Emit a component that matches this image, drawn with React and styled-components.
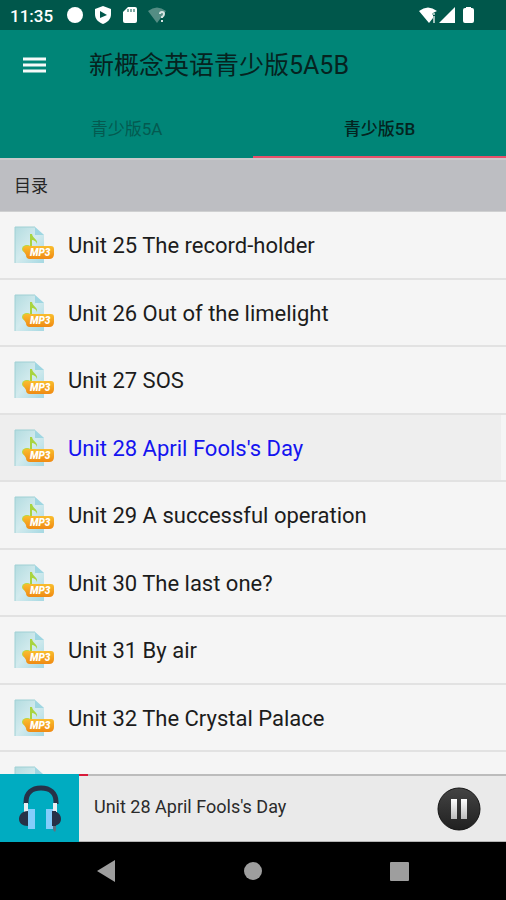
import React, { useState } from "react";
import styled, { createGlobalStyle } from "styled-components";

const GlobalStyle = createGlobalStyle`
  * { box-sizing: border-box; }
  body { margin: 0; background: #f5f5f5; }
  button { font: inherit; color: inherit; border: 0; padding: 0; background: none; cursor: pointer; }
  svg { display: block; flex: none; }
`;

const Screen = styled.div`
  display: flex;
  flex-direction: column;
  height: 100vh;
  overflow: hidden;
  background: #f5f5f5;
  color: #1c1c1c;
  font-family: Roboto, "Noto Sans CJK SC", sans-serif;
`;

const StatusBar = styled.div`
  display: flex;
  flex: none;
  align-items: center;
  justify-content: space-between;
  height: 30px;
  padding: 0 32px 0 10px;
  background: #00574b;
  color: #fff;
`;

const StatusGroup = styled.div`
  display: flex;
  align-items: center;
  gap: ${(p) => p.$gap}px;
`;

const Clock = styled.time`
  padding-top: 2px;
  font-size: 17px;
  font-weight: 500;
  line-height: 28px;
`;

const AppBar = styled.header`
  display: flex;
  flex: none;
  align-items: center;
  gap: 40px;
  height: 70px;
  padding-left: 21px;
  background: #008577;
`;

const MenuButton = styled.button`
  display: flex;
`;

const Title = styled.h1`
  margin: 0;
  padding-top: 2px;
  color: #06231f;
  font-size: 25px;
  font-weight: 400;
  line-height: 36px;
`;

const Tabs = styled.div`
  display: grid;
  flex: none;
  grid-template-columns: 1fr 1fr;
  height: 58px;
  background: #008577;
`;

const Tab = styled.button`
  padding-bottom: 2px;
  border-bottom: 2px solid ${(p) => (p["aria-selected"] ? "#e8506a" : "#008577")};
  color: ${(p) => (p["aria-selected"] ? "#042420" : "#045a50")};
  font-size: 17px;
  font-weight: ${(p) => (p["aria-selected"] ? 500 : 400)};
`;

const SectionTitle = styled.h2`
  flex: none;
  height: 54px;
  margin: 0;
  padding-left: 14px;
  border-top: 2px solid #c9cacb;
  border-bottom: 1px solid #cfd0d1;
  background: #bdbec2;
  color: #262626;
  font-size: 17px;
  font-weight: 400;
  line-height: 52px;
`;

const TrackList = styled.ul`
  flex: 1;
  min-height: 0;
  margin: 0;
  padding: 0;
  overflow-y: auto;
  scrollbar-width: none;
  list-style: none;
`;

const TrackItem = styled.li`
  height: 68px;
  border-bottom: 2px solid #e2e2e2;
  &:nth-child(even) { height: 67px; }
`;

const TrackButton = styled.button`
  display: flex;
  align-items: center;
  gap: 12px;
  width: ${(p) => (p.$active ? "calc(100% - 5px)" : "100%")};
  height: 100%;
  padding: 2px 0 0 14px;
  background: ${(p) => (p.$active ? "#eeeeee" : "transparent")};
  color: ${(p) => (p.$active ? "#1414f0" : "#1c1c1c")};
  font-size: 22px;
  line-height: 28px;
  text-align: left;
`;

const Player = styled.section`
  display: grid;
  flex: none;
  grid-template-columns: 79px 1fr;
  height: 68px;
  background: #eaeaea;
`;

const Cover = styled.div`
  display: flex;
  align-items: center;
  justify-content: center;
  background: #00acc1;
`;

const PlayerBody = styled.div`
  display: flex;
  flex-direction: column;
  border-bottom: 1px solid #b5b5b5;
`;

const Progress = styled.div`
  height: 2px;
  background: #bcbcbc;
`;

const ProgressFill = styled.div`
  height: 2px;
  background: #d81b3a;
`;

const PlayerRow = styled.div`
  display: flex;
  flex: 1;
  align-items: center;
  justify-content: space-between;
  padding: 0 25px 0 15px;
`;

const NowPlaying = styled.span`
  padding-bottom: 3px;
  color: #2b2b2b;
  font-size: 18px;
  line-height: 24px;
`;

const PauseButton = styled.button`
  display: flex;
  border-radius: 50%;
`;

const SystemNav = styled.nav`
  display: flex;
  flex: none;
  align-items: center;
  justify-content: center;
  gap: 126px;
  height: 58px;
  background: #000;
`;

const NavButton = styled.button`
  display: flex;
`;

const tracks = [
  "Unit 25 The record-holder",
  "Unit 26 Out of the limelight",
  "Unit 27 SOS",
  "Unit 28 April Fools's Day",
  "Unit 29 A successful operation",
  "Unit 30 The last one?",
  "Unit 31 By air",
  "Unit 32 The Crystal Palace",
  "Unit 33 Mercy mission",
];

function Mp3Icon() {
  return (
    <svg width="42" height="40" viewBox="0 0 42 40" aria-hidden="true">
      <defs>
        <linearGradient id="sheet" x1="0" y1="0" x2="1" y2="1">
          <stop offset="0" stopColor="#b3dce0" />
          <stop offset="0.5" stopColor="#d3ebee" />
          <stop offset="1" stopColor="#a5d8e2" />
        </linearGradient>
        <linearGradient id="tag" x1="0" y1="0" x2="0" y2="1">
          <stop offset="0" stopColor="#f9bd2e" />
          <stop offset="1" stopColor="#f08a12" />
        </linearGradient>
      </defs>
      <path d="M1 1h20l9 8v28H1z" fill="url(#sheet)" />
      <path d="M1 37V1h20" fill="none" stroke="#9fd0d4" />
      <path d="M21 1v8h9z" fill="#9fd6e2" />
      <path d="M16 22V8h2c1 5 6 5 5 10-1-3-3-4-5-4v8z" fill="#a9d43f" />
      <ellipse cx="13" cy="23" rx="5" ry="4" fill="#b9d83b" />
      <path d="M12 20h25q3 0 3 3v5q0 5-5 5H16q-4 0-4-4l-3-5q0-4 3-4z" fill="url(#tag)" />
      <text x="16" y="30" fill="#fff" fontFamily="Roboto, sans-serif" fontSize="10" fontWeight="900" fontStyle="italic">MP3</text>
    </svg>
  );
}

function HeadphonesIcon() {
  return (
    <svg width="44" height="48" viewBox="0 0 44 48" aria-hidden="true">
      <path d="M8 20v-2C8 9 14 4 23 4s15 5 15 14v2" fill="none" stroke="#263248" strokeWidth="5" />
      <path d="M6 19h4v9H6zM35 19h4v9h-4z" fill="#e8eef2" />
      <path d="M10 27v15C4 42 1 39 1 35s3-8 9-8zM34 27v15c6 0 9-3 9-7s-3-8-9-8z" fill="#263248" />
      <path d="M10 25h7v20h-7zM28 25h7v20h-7z" fill="#84cdfb" />
      <path d="M34 27v15h4V27z" fill="#263248" />
      <path d="M35 42h3v4l-1 2-2-2z" fill="#5c7382" />
    </svg>
  );
}

function PauseIcon() {
  return (
    <svg width="44" height="44" viewBox="0 0 44 44" aria-hidden="true">
      <defs>
        <linearGradient id="disc" x1="0" y1="0" x2="0" y2="1">
          <stop offset="0" stopColor="#444" />
          <stop offset="1" stopColor="#202020" />
        </linearGradient>
        <linearGradient id="bars" x1="0" y1="0" x2="0" y2="1">
          <stop offset="0" stopColor="#fff" />
          <stop offset="1" stopColor="#bbb" />
        </linearGradient>
      </defs>
      <circle cx="22" cy="22" r="21" fill="url(#disc)" stroke="#151515" />
      <path d="M14 12h6v20h-6zM24 12h6v20h-6z" fill="url(#bars)" />
    </svg>
  );
}

export default function App() {
  const [tab, setTab] = useState(1);
  const [active, setActive] = useState(3);
  return (
    <>
      <GlobalStyle />
      <Screen>
        <StatusBar>
          <StatusGroup $gap={13}>
            <Clock>11:35</Clock>
            <StatusGroup $gap={10}>
              <svg width="18" height="18" viewBox="0 0 18 18" aria-hidden="true">
                <circle cx="9" cy="9" r="8" fill="#fff" />
              </svg>
              <svg width="18" height="18" viewBox="0 0 18 18" aria-hidden="true">
                <path d="M9 0l8 3v5c0 5-3 8-8 10-5-2-8-5-8-10V3z" fill="#fff" />
                <path d="M6 5l7 4-7 3z" fill="#00574b" />
              </svg>
              <svg width="16" height="18" viewBox="0 0 16 18" aria-hidden="true">
                <path d="M6 1h7q2 0 2 2v12q0 2-2 2H3q-2 0-2-2V6z" fill="#fff" />
                <path d="M6 3v3M9 3v3M12 3v3" stroke="#00574b" />
              </svg>
              <svg width="18" height="18" viewBox="0 0 18 18" aria-hidden="true">
                <path d="M0 5Q9-2 18 5l-9 12z" fill="#548d84" />
                <path d="M12 8q0-2 2-2t2 2q0 2-2 3v1M14 14v2" fill="none" stroke="#d5e5e2" strokeWidth="2" />
              </svg>
            </StatusGroup>
          </StatusGroup>
          <StatusGroup $gap={2}>
            <svg width="18" height="18" viewBox="0 0 18 18" aria-hidden="true">
              <path d="M0 5Q9-2 18 5l-4 2v5l-4 5z" fill="#fff" />
              <path d="M13 8h3M15 10v7" stroke="#9dc0ba" strokeWidth="2" />
            </svg>
            <StatusGroup $gap={8}>
              <svg width="16" height="18" viewBox="0 0 16 18" aria-hidden="true">
                <path d="M16 1v16H0z" fill="#fff" />
              </svg>
              <svg width="11" height="18" viewBox="0 0 11 18" aria-hidden="true">
                <path d="M3 1h5v1h1q2 0 2 2v11q0 2-2 2H2q-2 0-2-2V4q0-2 2-2h1z" fill="#fff" />
              </svg>
            </StatusGroup>
          </StatusGroup>
        </StatusBar>
        <AppBar>
          <MenuButton type="button" aria-label="菜单">
            <svg width="28" height="18" viewBox="0 0 28 18" aria-hidden="true">
              <path d="M2 3h23M2 9h23M2 15h23" stroke="#f5faf9" strokeWidth="3" />
            </svg>
          </MenuButton>
          <Title>新概念英语青少版5A5B</Title>
        </AppBar>
        <Tabs role="tablist">
          {["青少版5A", "青少版5B"].map((label, i) => (
            <Tab key={label} type="button" role="tab" aria-selected={tab === i} onClick={() => setTab(i)}>
              {label}
            </Tab>
          ))}
        </Tabs>
        <SectionTitle>目录</SectionTitle>
        <TrackList>
          {tracks.map((name, i) => (
            <TrackItem key={name}>
              <TrackButton type="button" $active={active === i} onClick={() => setActive(i)}>
                <Mp3Icon />
                {name}
              </TrackButton>
            </TrackItem>
          ))}
        </TrackList>
        <Player>
          <Cover>
            <HeadphonesIcon />
          </Cover>
          <PlayerBody>
            <Progress>
              <ProgressFill style={{ width: "2%" }} />
            </Progress>
            <PlayerRow>
              <NowPlaying>{tracks[active]}</NowPlaying>
              <PauseButton type="button" aria-label="暂停">
                <PauseIcon />
              </PauseButton>
            </PlayerRow>
          </PlayerBody>
        </Player>
        <SystemNav>
          <NavButton type="button" aria-label="返回">
            <svg width="20" height="22" viewBox="0 0 20 22" aria-hidden="true">
              <path d="M18 0v22L0 11z" fill="#9e9e9e" />
            </svg>
          </NavButton>
          <NavButton type="button" aria-label="主屏幕">
            <svg width="20" height="20" viewBox="0 0 20 20" aria-hidden="true">
              <circle cx="10" cy="10" r="9" fill="#9e9e9e" />
            </svg>
          </NavButton>
          <NavButton type="button" aria-label="最近任务">
            <svg width="20" height="20" viewBox="0 0 20 20" aria-hidden="true">
              <rect x="1" y="1" width="19" height="19" rx="1" fill="#9e9e9e" />
            </svg>
          </NavButton>
        </SystemNav>
      </Screen>
    </>
  );
}
